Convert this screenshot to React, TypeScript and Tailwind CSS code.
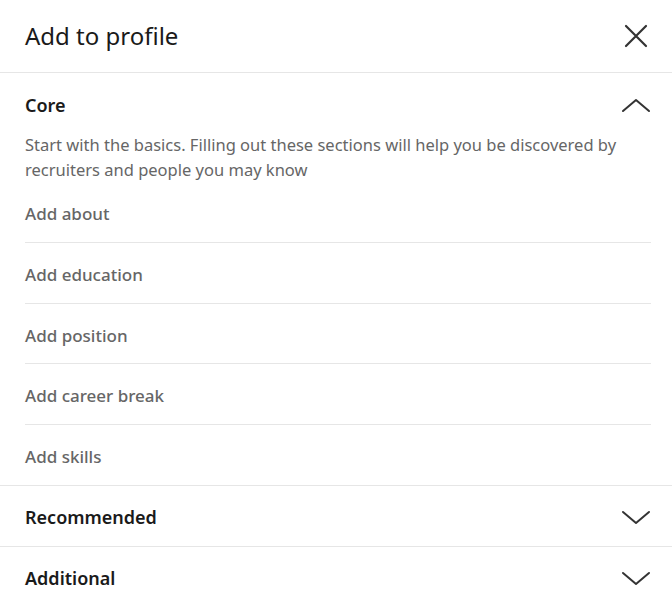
import { useState } from 'react';

const coreItems = ['Add about', 'Add education', 'Add position', 'Add career break', 'Add skills'];

const Chevron = ({ up }: { up?: boolean }) => (
  <svg width="30" height="16" viewBox="0 0 30 16" fill="none" className="shrink-0">
    <path
      d={up ? 'M2 14 L15 3 L28 14' : 'M2 3 L15 14 L28 3'}
      stroke="#333333"
      strokeWidth="2"
      strokeLinecap="round"
      strokeLinejoin="round"
    />
  </svg>
);

// Accordion section row
const SectionHeader = ({ title, open, onClick }: { title: string; open: boolean; onClick: () => void }) => (
  <button
    onClick={onClick}
    className="flex h-[60px] w-full items-center justify-between pt-[3px] pl-[25px] pr-[21px] text-left"
  >
    <span className="text-[18px] font-semibold text-[#1a1a1a]">{title}</span>
    <Chevron up={open} />
  </button>
);

const App = () => {
  const [open, setOpen] = useState<Record<string, boolean>>({ core: true, recommended: false, additional: false });
  const toggle = (k: string) => setOpen((s) => ({ ...s, [k]: !s[k] }));

  return (
    <div className="h-[600px] w-[672px] overflow-hidden bg-white" style={{ fontFamily: '"Noto Sans", sans-serif' }}>
      {/* Header */}
      <div className="flex h-[73px] items-center justify-between border-b border-[#e6e6e6] pl-[25px] pr-[20px]">
        <h2 className="text-[24px] font-normal text-[#1a1a1a]">Add to profile</h2>
        <button className="flex h-8 w-8 items-center justify-center">
          <svg width="24" height="24" viewBox="0 0 24 24" fill="none">
            <path d="M2 2 L22 22 M22 2 L2 22" stroke="#333333" strokeWidth="2.2" strokeLinecap="round" />
          </svg>
        </button>
      </div>

      {/* Core */}
      <div className="border-b border-[#e6e6e6]">
        <button
          onClick={() => toggle('core')}
          className="flex h-[59px] w-full items-center justify-between pt-[5px] pl-[25px] pr-[21px] text-left"
        >
          <span className="text-[18px] font-semibold text-[#1a1a1a]">Core</span>
          <Chevron up={open.core} />
        </button>
        {open.core && (
          <div className="pl-[25px] pr-[21px]">
            <p className="text-[16.5px] leading-[25px] text-[#666666]">
              Start with the basics. Filling out these sections will help you be discovered by recruiters and people you may know
            </p>
            <ul>
              {coreItems.map((item, i) => (
                <li
                  key={item}
                  className={`pt-[19px] pb-[15px] text-[17px] leading-[25.75px] font-medium text-[#666666] ${
                    i < coreItems.length - 1 ? 'border-b border-[#e6e6e6]' : ''
                  }`}
                >
                  {item}
                </li>
              ))}
            </ul>
          </div>
        )}
      </div>

      <div className="border-b border-[#e6e6e6]">
        <SectionHeader title="Recommended" open={open.recommended} onClick={() => toggle('recommended')} />
      </div>
      <div>
        <SectionHeader title="Additional" open={open.additional} onClick={() => toggle('additional')} />
      </div>
    </div>
  );
};

export default App;
